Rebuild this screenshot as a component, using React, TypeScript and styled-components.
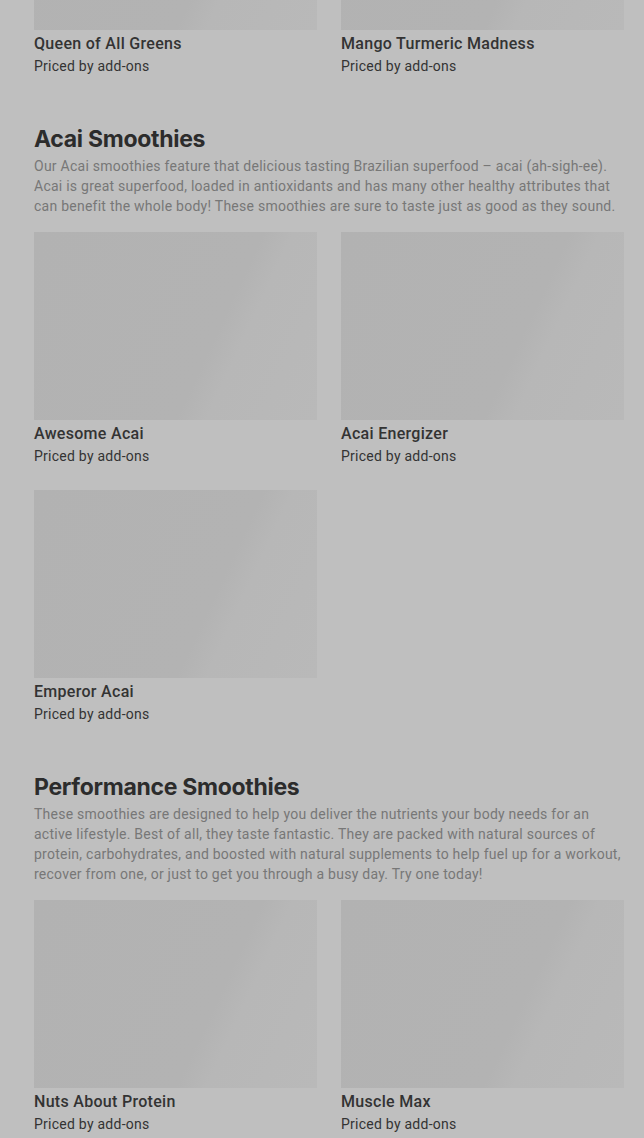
import React from 'react';
import styled, { createGlobalStyle } from 'styled-components';

const GlobalStyle = createGlobalStyle`
  html, body {
    margin: 0;
    padding: 0;
    background: #bfbfbf;
    overflow: hidden;
  }
  body {
    font-family: Roboto, "Liberation Sans", sans-serif;
    -webkit-font-smoothing: antialiased;
  }
`;

interface Item {
  name: string;
}

interface Section {
  title?: string;
  description?: string;
  items: Item[];
}

const sections: Section[] = [
  {
    items: [{ name: 'Queen of All Greens' }, { name: 'Mango Turmeric Madness' }],
  },
  {
    title: 'Acai Smoothies',
    description:
      'Our Acai smoothies feature that delicious tasting Brazilian superfood – acai (ah-sigh-ee). Acai is great superfood, loaded in antioxidants and has many other healthy attributes that can benefit the whole body! These smoothies are sure to taste just as good as they sound.',
    items: [{ name: 'Awesome Acai' }, { name: 'Acai Energizer' }, { name: 'Emperor Acai' }],
  },
  {
    title: 'Performance Smoothies',
    description:
      'These smoothies are designed to help you deliver the nutrients your body needs for an active lifestyle. Best of all, they taste fantastic. They are packed with natural sources of protein, carbohydrates, and boosted with natural supplements to help fuel up for a workout, recover from one, or just to get you through a busy day. Try one today!',
    items: [{ name: 'Nuts About Protein' }, { name: 'Muscle Max' }],
  },
];

// the page is shown scrolled down, so the first row is mostly off screen
const Menu = styled.main`
  display: flex;
  flex-direction: column;
  gap: 47px;
  margin-top: -158.5px;
  padding: 0 20px 0 34px;
`;

const Block = styled.section`
  display: flex;
  flex-direction: column;
`;

const Heading = styled.h2`
  margin: 0;
  font-family: Inter, Roboto, sans-serif;
  font-size: 23px;
  line-height: 32px;
  font-weight: 700;
  letter-spacing: -0.3px;
  color: #2c2c2c;
`;

const Description = styled.p`
  margin: 1px 0 16px;
  font-size: 14px;
  line-height: 20px;
  letter-spacing: 0.25px;
  color: #777777;
`;

const Grid = styled.div`
  display: grid;
  grid-template-columns: 1fr 1fr;
  column-gap: 24px;
  row-gap: 24px;
`;

const Card = styled.div`
  display: flex;
  flex-direction: column;
  cursor: pointer;
`;

const Thumb = styled.div`
  height: 188px;
  background: linear-gradient(
    115deg,
    #b2b2b2 0%,
    #b3b3b3 62%,
    #b7b7b7 70%,
    #b9b9b9 100%
  );
`;

const Name = styled.div`
  margin-top: 2px;
  font-size: 16px;
  line-height: 24px;
  font-weight: 500;
  letter-spacing: 0.3px;
  color: #333333;
`;

const Price = styled.div`
  font-size: 14px;
  line-height: 20px;
  letter-spacing: 0.25px;
  color: #333333;
`;

export default function App() {
  return (
    <>
      <GlobalStyle />
      <Menu>
        {sections.map((section, i) => (
          <Block key={i}>
            {section.title && <Heading>{section.title}</Heading>}
            {section.description && <Description>{section.description}</Description>}
            <Grid>
              {section.items.map((item) => (
                <Card key={item.name}>
                  <Thumb />
                  <Name>{item.name}</Name>
                  <Price>Priced by add-ons</Price>
                </Card>
              ))}
            </Grid>
          </Block>
        ))}
      </Menu>
    </>
  );
}
